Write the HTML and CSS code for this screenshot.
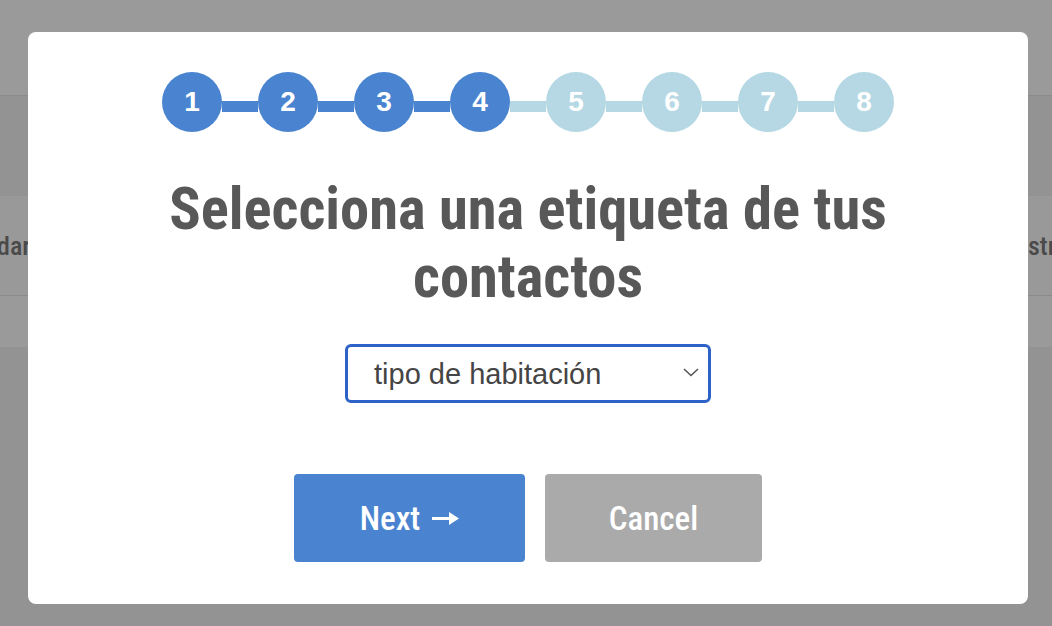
FILE: index.html
```html
<!DOCTYPE html>
<html>
<head>
    <title>Selecciona una etiqueta</title>
    <link rel="stylesheet" href="styles.css">
</head>
<body>
    <div class="page">
        <div class="topbar"></div>
        <div class="band"></div>
        <div class="row">
            <span class="cell-left">dar</span>
            <span class="cell-right">str</span>
        </div>
        <div class="band-light"></div>
    </div>

    <div class="overlay">
        <div class="modal">
            <div class="steps">
                <div class="step done">1</div>
                <div class="link done"></div>
                <div class="step done">2</div>
                <div class="link done"></div>
                <div class="step done">3</div>
                <div class="link done"></div>
                <div class="step done">4</div>
                <div class="link"></div>
                <div class="step">5</div>
                <div class="link"></div>
                <div class="step">6</div>
                <div class="link"></div>
                <div class="step">7</div>
                <div class="link"></div>
                <div class="step">8</div>
            </div>

            <h2 class="title">Selecciona una etiqueta de tus contactos</h2>

            <div class="select-wrap">
                <select class="select">
                    <option>tipo de habitación</option>
                </select>
                <svg class="chevron" width="16" height="9" viewBox="0 0 16 9">
                    <path d="M1 1 L8 7.5 L15 1" fill="none" stroke="#555" stroke-width="1.6"/>
                </svg>
            </div>

            <div class="buttons">
                <button class="btn btn-next">
                    Next
                    <svg class="arrow" width="27" height="13" viewBox="0 0 27 13">
                        <rect x="0" y="5" width="19" height="3" fill="white"/>
                        <path d="M17 0 L27 6.5 L17 13 Z" fill="white"/>
                    </svg>
                </button>
                <button class="btn btn-cancel">Cancel</button>
            </div>
        </div>
    </div>
</body>
</html>
```

FILE: styles.css
```css
body {
    margin: 0;
    background: #939393;
    font-family: Roboto, sans-serif;
    overflow: hidden;
}

.topbar {
    height: 95px;
    background: #9a9a9a;
    border-bottom: 1px solid #8b8b8b;
}

.band {
    height: 100px;
    background: #939393;
}

.row {
    height: 99px;
    background: #999999;
    border-bottom: 1px solid #8b8b8b;
    display: flex;
    align-items: center;
    justify-content: space-between;
    font-family: "Roboto Condensed", Roboto, sans-serif;
    font-stretch: condensed;
    font-size: 26px;
    font-weight: 500;
    color: #4a4a4a;
}

.cell-left {
    margin-left: -3px;
}

.cell-right {
    margin-right: -4px;
}

.band-light {
    height: 51px;
    background: #9a9a9a;
}

.overlay {
    position: fixed;
    top: 0;
    left: 0;
    width: 1052px;
    height: 626px;
    padding: 32px 0 0 28px;
    box-sizing: border-box;
}

.modal {
    width: 1000px;
    background: white;
    border-radius: 8px;
    padding: 40px 0 42px;
    display: flex;
    flex-direction: column;
    align-items: center;
}

.steps {
    display: flex;
    align-items: flex-start;
}

.step {
    width: 60px;
    height: 60px;
    border-radius: 50%;
    background: #b6d8e4;
    color: white;
    font-family: "Liberation Sans", Arial, sans-serif;
    font-weight: bold;
    font-size: 28px;
    display: flex;
    align-items: center;
    justify-content: center;
}

.link {
    width: 36px;
    height: 11px;
    margin-top: 29px;
    background: #b6d8e4;
}

.step.done,
.link.done {
    background: #4a84d0;
}

.title {
    margin: 43px 0 0 0;
    font-family: "Roboto Condensed", Roboto, sans-serif;
    font-stretch: condensed;
    font-weight: bold;
    font-size: 58.5px;
    line-height: 68px;
    color: #585858;
    text-align: center;
    width: 800px;
}

.select-wrap {
    position: relative;
    margin-top: 33px;
}

.select {
    appearance: none;
    -webkit-appearance: none;
    width: 366px;
    height: 59px;
    border: 3px solid #2d62c8;
    border-radius: 6px;
    background: white;
    padding: 0 0 0 26px;
    font-family: "Liberation Sans", Arial, sans-serif;
    font-size: 29px;
    color: #454545;
    outline: none;
}

.chevron {
    position: absolute;
    top: 24px;
    right: 12px;
}

.buttons {
    display: flex;
    gap: 20px;
    margin-top: 71px;
}

.btn {
    height: 88px;
    border: none;
    border-radius: 4px;
    color: white;
    font-family: "Roboto Condensed", Roboto, sans-serif;
    font-stretch: condensed;
    font-weight: 500;
    font-size: 33px;
    display: flex;
    align-items: center;
    justify-content: center;
    gap: 12px;
}

.btn-next {
    width: 231px;
    background: #4a84d0;
}

.btn-cancel {
    width: 217px;
    background: #aaaaaa;
}
```
